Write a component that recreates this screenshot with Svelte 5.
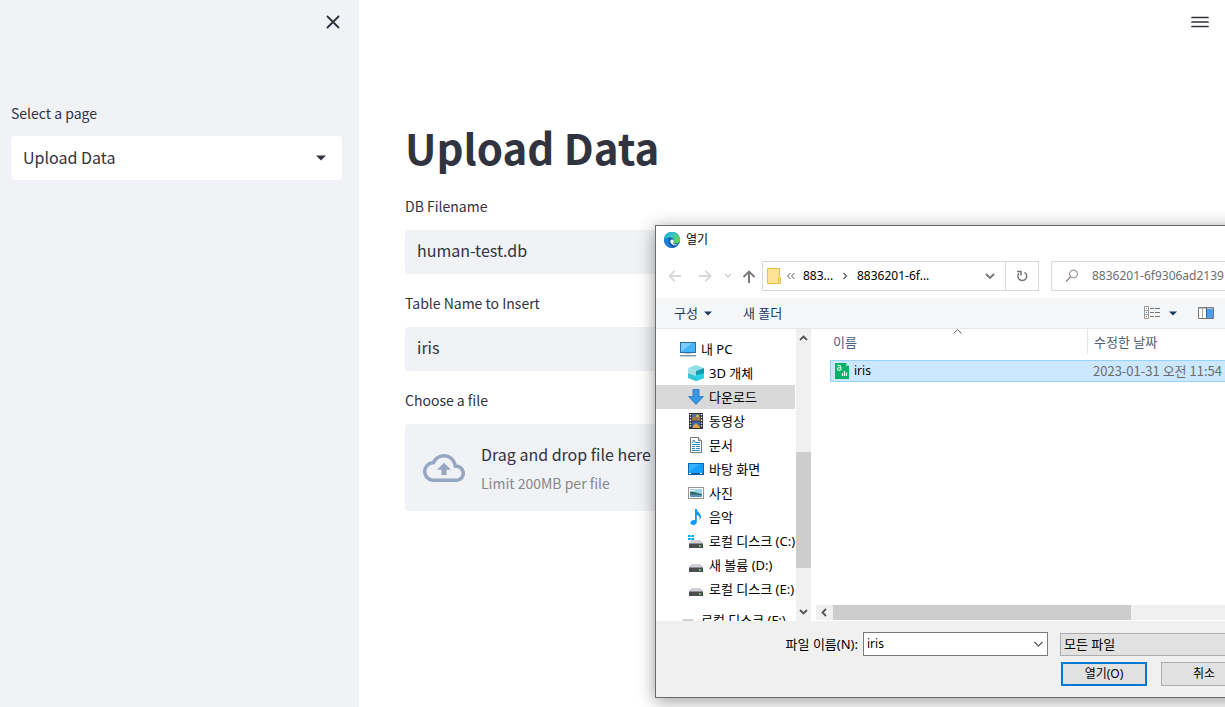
<script>
  const places = [
    { name: '3D 개체', icon: 'cube' },
    { name: '다운로드', icon: 'download', selected: true },
    { name: '동영상', icon: 'video' },
    { name: '문서', icon: 'doc' },
    { name: '바탕 화면', icon: 'desktop' },
    { name: '사진', icon: 'picture' },
    { name: '음악', icon: 'music' },
    { name: '로컬 디스크 (C:)', icon: 'system' },
    { name: '새 볼륨 (D:)', icon: 'disk' },
    { name: '로컬 디스크 (E:)', icon: 'disk' }
  ];
  let dbName = $state('human-test.db');
  let tableName = $state('iris');
  let fileName = $state('iris');
</script>

{#snippet placeIcon(kind)}
  <svg class="icon" width="16" height="16" viewBox="0 0 16 16" aria-hidden="true">
    {#if kind === 'pc'}
      <rect x="0.5" y="1.5" width="15" height="10" fill="#46b4fb" stroke="#2d6e9f" />
      <path d="M1 11 12 2H1z" fill="#7accfd" />
      <path d="M5 12h6v1H5z" fill="#b9cbd8" />
      <path d="M0 14h16v1.5H0z" fill="#8397a8" />
    {:else if kind === 'cube'}
      <path d="M0 3 8 0l8 3-8 3z" fill="#8fdfe8" />
      <path d="M0 3l8 3v10l-8-3z" fill="#a5dde4" />
      <path d="M0 13V8.500L8 11v5z" fill="#35c4d6" />
      <path d="M8 6l8-3v10l-8 3z" fill="#0f9bb0" />
      <path d="M8 16V10l8-1.500V13z" fill="#27d3e4" />
    {:else if kind === 'download'}
      <path d="M5 .5h6v7h4.500L8 15.500.5 7.500H5z" fill="#3b97e3" stroke="#2477bd" stroke-width=".8" />
    {:else if kind === 'video'}
      <path d="M1 0h14v16H1z" fill="#33343a" />
      <path d="M4 1h8v6.500H4z" fill="#4b6db5" />
      <path d="M4 8.500h8V15H4z" fill="#3c62b2" />
      <path d="M4 5l3-2 2 3 3-3v4.500H4z" fill="#a97d36" />
      <circle cx="9.500" cy="3" r="1.500" fill="#e8bc32" />
      <path d="M5 13l3-3 4 4v1H5z" fill="#e1a43c" />
      <path d="M2.500 1v14M13.500 1v14" stroke="#fff" stroke-width="1.300" stroke-dasharray="1.300 1.500" />
    {:else if kind === 'doc'}
      <path d="M2.500.5h8l3 3v12h-11z" fill="#fff" stroke="#777" />
      <path d="M10.500.5v3h3" fill="#ddd" stroke="#777" />
      <path d="M4 6l2-3 1.500 3M4 7.500h8M4 9.500h3M8 9.500h4M4 11.500h3M8 11.500h4M4 13.500h8M8 5.500h4" fill="none" stroke="#2e8bc9" />
    {:else if kind === 'desktop'}
      <rect x=".5" y="2.500" width="15" height="11" fill="#13a0fc" stroke="#0b68ab" />
      <path d="M1 11 12 3H1z" fill="#37b0ff" />
      <path d="M1 12h14v1.500H1z" fill="#075a9c" />
      <path d="M1 12.500h2M12 12.500h2" stroke="#fff" />
    {:else if kind === 'picture'}
      <rect x=".5" y="2.500" width="15" height="11" fill="#fff" stroke="#949494" />
      <path d="M2 4h12v8H2z" fill="#9ed1ec" />
      <path d="M2 7c4-1 6 1 12 2v1H2z" fill="#2e6d61" />
      <path d="M2 9.500l12 .5v2H2z" fill="#5f93c4" />
      <path d="M2 5.500h5" stroke="#fff" />
    {:else if kind === 'music'}
      <path d="M7 0h1.800c.2 3.500 4.400 4 4.200 8-.1 1.400-.7 2.400-1.500 3.200.6-3-.3-4.700-2.700-5.200v7c0 2-1.800 3-3.500 3S2.500 15 2.500 13.700c0-1.800 2.400-3.200 4.500-2.500z" fill="#0f98f5" />
    {:else}
      <path d="M3.500 7h9L15 10H1z" fill="#cfd1d4" />
      <path d="M1 10h14v5H1z" fill="#4b4d50" />
      <path d="M1 10.500h14" stroke="#8d9094" />
      <path d="M11 13h2" stroke="#5bf066" stroke-width="1.500" />
      {#if kind === 'system'}
        <path d="M0 2h2.600v2H0zM3.400 2H6v2H3.400zM0 5h2.600v2H0zM3.400 5H6v2H3.400z" fill="#08a9ec" />
      {/if}
    {/if}
  </svg>
{/snippet}

<div class="app">
  <aside class="sidebar">
    <div class="side-top">
      <button class="bare" aria-label="Close sidebar">
        <svg width="16" height="16" viewBox="0 0 16 16"><path d="M2.500 2.500l11 11M13.500 2.500l-11 11" stroke="#31333f" stroke-width="1.900" stroke-linecap="round" /></svg>
      </button>
    </div>
    <label class="caption" for="page">Select a page</label>
    <div class="picker">
      <select id="page"><option>Upload Data</option></select>
      <svg width="12" height="6" viewBox="0 0 12 6" aria-hidden="true"><path d="M1 .5h10L6 5.500z" fill="#31333f" /></svg>
    </div>
  </aside>

  <main>
    <header>
      <button class="bare" aria-label="Menu">
        <svg width="20" height="16" viewBox="0 0 20 16"><path d="M2 3.500h16M2 8h16M2 12.500h16" stroke="#31333f" stroke-width="1.700" stroke-linecap="round" /></svg>
      </button>
    </header>
    <div class="content">
      <h1>Upload Data</h1>
      <label class="caption" for="db">DB Filename</label>
      <input id="db" class="field" bind:value={dbName} />
      <label class="caption" for="table">Table Name to Insert</label>
      <input id="table" class="field" bind:value={tableName} />
      <label class="caption" for="file">Choose a file</label>
      <label class="drop">
        <input id="file" type="file" />
        <svg width="42" height="42" viewBox="0 0 24 24" aria-hidden="true">
          <path d="M19.350 10.040A7.490 7.490 0 0 0 12 4C9.110 4 6.600 5.640 5.350 8.040A5.994 5.994 0 0 0 0 14c0 3.310 2.690 6 6 6h13c2.760 0 5-2.240 5-5 0-2.640-2.050-4.780-4.650-4.960zM19 18H6c-2.210 0-4-1.790-4-4 0-2.050 1.530-3.760 3.560-3.970l1.070-.11.5-.95A5.469 5.469 0 0 1 12 6c2.620 0 4.880 1.860 5.390 4.430l.3 1.500 1.530.11A2.980 2.980 0 0 1 22 15c0 1.650-1.350 3-3 3zM8 13h2.550v3h2.900v-3H16l-4-4z" fill="#97a6c3" />
        </svg>
        <span class="drop-text"><span>Drag and drop file here</span><small>Limit 200MB per file</small></span>
      </label>
    </div>
  </main>

  <div class="dialog" role="dialog" aria-labelledby="dialog-title">
    <div class="title">
      <svg width="16" height="16" viewBox="0 0 16 16" aria-hidden="true">
        <defs>
          <linearGradient id="wave" x1="0" y1="0" x2="1" y2=".6"><stop offset="0" stop-color="#1ba4dc" /><stop offset=".5" stop-color="#35c3c6" /><stop offset="1" stop-color="#62d64c" /></linearGradient>
        </defs>
        <circle cx="8" cy="8" r="8" fill="#0d59a8" />
        <path d="M0 8a8 8 0 0 1 16-.5c0 2.500-2 4-4.500 4-1.500 0-2.500-.7-1.800-1.700C10.500 8 9 5.500 6 5.500 3 5.500.8 7 0 8z" fill="url(#wave)" />
        <path d="M0 8.500C.5 6.500 3 5.200 5.500 5.500 3.500 7.500 4 12 8 15.500v.5a8 8 0 0 1-8-7.500z" fill="#1682d8" />
        <path d="M6.600 8c-1 2.500 1.500 5.500 4.500 5.300 1.500 0 2.700-.6 3.600-1.300-1.500.8-5.300 1-5.500-1.300.9-1.200.7-2.700-.7-3.200-.8-.2-1.500 0-1.900.5z" fill="#fff" />
      </svg>
      <span id="dialog-title">열기</span>
    </div>

    <div class="nav">
      <div class="arrows">
        <button class="bare" aria-label="Back"><svg width="14" height="14" viewBox="0 0 14 14"><path d="M13 7H2M6.500 2 1.500 7l5 5" fill="none" stroke="#d8d8d8" stroke-width="1.800" /></svg></button>
        <button class="bare" aria-label="Forward"><svg width="14" height="14" viewBox="0 0 14 14"><path d="M1 7h11M7.500 2l5 5-5 5" fill="none" stroke="#d8d8d8" stroke-width="1.800" /></svg></button>
        <button class="bare" aria-label="Recent"><svg width="8" height="14" viewBox="0 0 8 14"><path d="M1 5l3 3 3-3" fill="none" stroke="#cfcfcf" stroke-width="1.500" /></svg></button>
        <button class="bare" aria-label="Up"><svg width="14" height="14" viewBox="0 0 14 14"><path d="M7 14V3M1.500 8 7 2.500 12.500 8" fill="none" stroke="#767676" stroke-width="1.900" /></svg></button>
      </div>
      <div class="path">
        <svg width="14" height="16" viewBox="0 0 14 16" aria-hidden="true"><path d="M.5.5h12v9h1v6H.5z" fill="#ffe394" stroke="#e8c14c" /><path d="M11.500 15V9.500" stroke="#e8c14c" /></svg>
        <svg class="crumbs" width="8" height="8" viewBox="0 0 8 8" aria-hidden="true"><path d="M3.500 1l-3 3 3 3M7.500 1l-3 3 3 3" fill="none" stroke="#555" /></svg>
        <span class="first">883...</span>
        <svg width="6" height="8" viewBox="0 0 6 8" aria-hidden="true"><path d="M1.500 1l3 3-3 3" fill="none" stroke="#666" stroke-width="1.400" /></svg>
        <span class="second">8836201-6f...</span>
        <button class="bare" aria-label="Show locations"><svg width="10" height="8" viewBox="0 0 10 8"><path d="M1 2l4 4 4-4" fill="none" stroke="#777" stroke-width="1.900" /></svg></button>
        <button class="bare refresh" aria-label="Refresh"><svg width="12" height="12" viewBox="0 0 12 12"><path d="M8.500 2.300A4.400 4.400 0 1 1 3 3.200M1 1.500h4v4" fill="none" stroke="#777" stroke-width="1.500" /></svg></button>
      </div>
      <div class="search">
        <svg width="14" height="14" viewBox="0 0 14 14" aria-hidden="true"><circle cx="8.500" cy="5" r="4" fill="none" stroke="#8b8080" /><path d="M5.500 8 1 12.500" stroke="#8b8080" stroke-width="1.300" /></svg>
        <input aria-label="Search" placeholder="8836201-6f9306ad2139" />
      </div>
    </div>

    <div class="tools">
      <button class="bare tool">구성 <svg width="8" height="5" viewBox="0 0 8 5"><path d="M0 .5h8L4 4.500z" fill="#1e395b" /></svg></button>
      <button class="bare tool">새 폴더</button>
      <div class="views">
        <button class="bare" aria-label="View"><svg width="16" height="14" viewBox="0 0 16 14"><path d="M.5.5h4v12h-4zM.5 4.500h4M.5 8.500h4" fill="#fff" stroke="#999" /><path d="M6 2.500h4M11 2.500h5M6 6.500h4M11 6.500h5M6 10.500h4M11 10.500h5" stroke="#777" /><path d="M2 2.500h1" stroke="#888" /><path d="M2 6.500h1" stroke="#3a8fd4" /><path d="M2 10.500h1" stroke="#c33" /></svg></button>
        <button class="bare" aria-label="View options"><svg width="8" height="5" viewBox="0 0 8 5"><path d="M0 .5h8L4 4.500z" fill="#1e395b" /></svg></button>
        <button class="bare pane" aria-label="Preview pane"><svg width="16" height="12" viewBox="0 0 16 12"><path d="M.5.5h15v11H.5z" fill="#fff" stroke="#777" /><path d="M1 1h14" stroke="#888" /><path d="M4.500 1v10" stroke="#aaa" /><path d="M9 2h6v9H9z" fill="#4a9fe6" /><path d="M8.500 1v10" stroke="#2d6da4" /></svg></button>
      </div>
    </div>

    <div class="body">
      <ul class="tree">
        <li class="root">{@render placeIcon('pc')}<span>내 PC</span></li>
        {#each places as place}
          <li class:selected={place.selected}>{@render placeIcon(place.icon)}<span>{place.name}</span></li>
        {/each}
        <li class="root extra">{@render placeIcon('disk')}<span>로컬 디스크 (F:)</span></li>
      </ul>
      <div class="vbar">
        <svg width="9" height="6" viewBox="0 0 9 6" aria-hidden="true"><path d="M1 5l3.500-3.500L8 5" fill="none" stroke="#555" stroke-width="1.800" /></svg>
        <div class="vtrack"><div class="vthumb"></div></div>
        <svg width="9" height="6" viewBox="0 0 9 6" aria-hidden="true"><path d="M1 1l3.500 3.500L8 1" fill="none" stroke="#555" stroke-width="1.800" /></svg>
      </div>
      <div class="files">
        <table>
          <thead>
            <tr>
              <th class="name">이름
                <svg class="sort" width="9" height="5" viewBox="0 0 9 5" aria-hidden="true"><path d="M.5 4.500l4-4 4 4" fill="none" stroke="#666" /></svg>
              </th>
              <th>수정한 날짜</th>
            </tr>
          </thead>
          <tbody>
            <tr>
              <td class="name"><div class="file">
                <svg width="14" height="16" viewBox="0 0 14 16" aria-hidden="true"><path d="M0 0h11l3 3v13H0z" fill="#08b069" /><path d="M11 0v3h3z" fill="#9be2c1" /><path d="M2.500 3c1-.8 3.300-.8 3.300.8V7.500M5.800 4.700C4 4.600 2.300 4.900 2.300 6.200c0 1.600 2.800 1.400 3.500 0" fill="none" stroke="#c9f2dd" stroke-width="1.200" /><path d="M7.500 13v-3M9.500 13V8M11.500 13V9.500" stroke="#fff" stroke-width="1.200" /></svg>
                <span>iris</span></div></td>
              <td class="date">2023-01-31 오전 11:54</td>
            </tr>
          </tbody>
        </table>
        <div class="hbar">
          <svg width="6" height="9" viewBox="0 0 6 9" aria-hidden="true"><path d="M5 1 1.500 4.500 5 8" fill="none" stroke="#555" stroke-width="1.800" /></svg>
          <div class="hthumb"></div>
        </div>
      </div>
    </div>

    <div class="foot">
      <label for="fname">파일 이름(N):</label>
      <div class="combo">
        <input id="fname" bind:value={fileName} />
        <button class="bare" aria-label="Show file names"><svg width="9" height="6" viewBox="0 0 9 6"><path d="M.5 1l4 4 4-4" fill="none" stroke="#555" stroke-width="1.200" /></svg></button>
      </div>
      <select aria-label="File type"><option>모든 파일</option></select>
      <div class="actions">
        <button class="push primary">열기(O)</button>
        <button class="push">취소</button>
      </div>
    </div>
  </div>
</div>

<style>
  :global(body) { margin: 0; }
  .app, .app * { box-sizing: border-box; }
  .app {
    position: relative;
    display: flex;
    min-height: 100vh;
    overflow: hidden;
    background: #fff;
    color: #31333f;
    font: 16px/24px "Noto Sans CJK KR", sans-serif;
  }
  button, input, select { font: inherit; color: inherit; }
  svg { display: block; flex: none; }
  .bare { display: flex; align-items: center; border: 0; padding: 0; background: none; }

  .sidebar { flex: none; width: 359px; padding: 0 17px 0 11px; background: #f0f2f6; }
  .side-top { display: flex; justify-content: flex-end; padding: 14px 1px 72px 0; }
  .caption { display: block; font-size: 14px; line-height: 22px; padding-bottom: 13px; }
  .sidebar .caption { padding-bottom: 12px; }
  .picker { display: flex; align-items: center; height: 44px; border-radius: 4px; background: #fff; }
  .picker select { flex: 1; height: 44px; padding: 0 12px 2px; border: 0; background: none; appearance: none; }
  .picker svg { margin-right: 15px; }

  main { flex: 1; min-width: 0; }
  header { display: flex; justify-content: flex-end; padding: 14px 15px 0 0; }
  .content { padding: 87px 46px 0; }
  h1 { margin: 0; padding-bottom: 18px; font-size: 42px; line-height: 60px; font-weight: 700; }
  .field { display: block; width: 100%; height: 44px; margin-bottom: 18px; padding: 0 12px 4px; border: 0; border-radius: 4px; background: #f0f2f6; }
  .drop { display: flex; align-items: center; gap: 16px; height: 87px; padding: 0 18px; border-radius: 4px; background: #f0f2f6; }
  .drop input { position: absolute; width: 1px; height: 1px; opacity: 0; }
  .drop-text { display: flex; flex-direction: column; gap: 5px; padding-top: 2px; }
  .drop small { font-size: 14px; color: #86888f; }

  .dialog {
    position: absolute;
    top: 225px;
    left: 655px;
    right: -34px;
    border: 1px solid #6b6b6b;
    background: #fff;
    box-shadow: 0 3px 16px rgba(0, 0, 0, 0.4);
    color: #000;
    font-family: "Noto Sans", "Noto Sans CJK KR", sans-serif;
    font-size: 12px;
    line-height: 16px;
  }
  .tools, .tree, th, .date, .foot > label, .foot > select { font-size: 13px; }
  .title { display: flex; align-items: center; gap: 6px; height: 28px; padding-left: 8px; }
  .nav { display: flex; padding: 7px 10px 7px 12px; }
  .arrows { display: flex; flex: none; align-items: center; gap: 16px; width: 94px; }
  .arrows button:nth-child(3) { margin: 0 -6px 0 -4px; }
  .path, .search { display: flex; align-items: center; height: 30px; border: 1px solid #d9d9d9; }
  .path { flex: none; width: 277px; padding-left: 4px; }
  .crumbs { margin: 0 8px 0 6px; }
  .first { width: 39px; }
  .second { flex: 1; padding-left: 9px; }
  .refresh { justify-content: center; align-self: stretch; width: 33px; margin-left: 10px; border-left: 1px solid #d9d9d9; }
  .search { flex: 1; min-width: 0; margin-left: 12px; padding-left: 13px; gap: 13px; }
  .search input { flex: 1; min-width: 0; padding: 0; border: 0; background: none; }
  .search input::placeholder { color: #6d6d6d; opacity: 1; }

  .tools { display: flex; align-items: center; gap: 31px; height: 31px; padding: 0 44px 0 18px; border-bottom: 1px solid #e5e7ea; background: #f5f6f7; color: #1e395b; }
  .tool { gap: 6px; }
  .views { display: flex; align-items: center; gap: 9px; margin-left: auto; }
  .pane { margin-left: 12px; }

  .body { display: flex; height: 292px; }
  .tree { flex: none; width: 140px; margin: 0; padding: 8px 0 0; overflow: hidden; list-style: none; }
  .tree li { display: flex; align-items: center; gap: 5px; height: 24px; margin-right: 1px; padding-left: 32px; white-space: nowrap; }
  .tree .root { padding-left: 24px; }
  .tree .extra { margin-top: 7px; }
  .tree .selected { background: #d9d9d9; }
  .vbar { display: flex; flex-direction: column; align-items: center; flex: none; width: 15px; padding: 6px 0; background: #f0f0f0; }
  .vtrack { flex: 1; width: 100%; padding-top: 111px; }
  .vthumb { height: 116px; background: #cdcdcd; }
  .files { display: flex; flex-direction: column; justify-content: space-between; flex: 1; min-width: 0; margin-left: 5px; }
  table { width: calc(100% - 14px); margin-left: 14px; border-spacing: 0; table-layout: fixed; }
  th { height: 25px; padding: 0 0 0 6px; color: #4c607a; font-weight: 400; text-align: left; }
  th.name { position: relative; width: 258px; padding-left: 3px; border-right: 1px solid #e5e5e5; }
  .sort { position: absolute; top: 0; left: 123px; }
  tbody::before { content: ""; display: block; height: 6px; }
  td { height: 22px; padding: 0 0 0 6px; border: solid #99d1ff; border-width: 1px 0; background: #cce8ff; }
  td.name { padding-left: 4px; border-left-width: 1px; }
  .file { display: flex; align-items: center; gap: 5px; }
  .date { padding-left: 5px; color: #6d6d6d; font-family: "Noto Sans CJK KR", sans-serif; white-space: nowrap; }
  .hbar { display: flex; align-items: center; height: 15px; margin-bottom: 1px; padding-left: 5px; background: #f0f0f0; }
  .hthumb { width: 298px; height: 15px; margin-left: 6px; background: #cdcdcd; }

  .foot { display: grid; grid-template-columns: 207px 185px 1fr; gap: 6px 0; align-items: center; padding: 11px 11px 11px 0; background: #f0f0f0; }
  .foot > label { padding-right: 5px; text-align: right; }
  .combo { display: flex; align-items: center; height: 24px; padding: 0 4px 0 3px; border: 1px solid #7a7a7a; background: #fff; }
  .combo input { flex: 1; min-width: 0; padding: 0; border: 0; background: none; }
  .foot > select { height: 23px; margin-left: 12px; padding: 0 3px; border: 1px solid #adadad; border-radius: 0; background: #e1e1e1; appearance: none; }
  .actions { grid-column: 3; display: flex; justify-content: space-between; margin-left: 13px; }
  .push { width: 86px; height: 24px; padding: 0; border: 1px solid #adadad; background: #e1e1e1; }
  .primary { border: 2px solid #0078d7; }
</style>
